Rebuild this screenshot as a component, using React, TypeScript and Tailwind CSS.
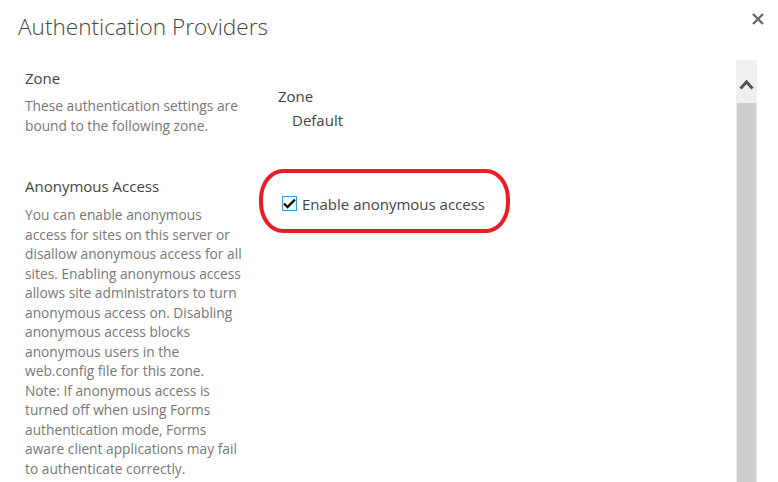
import React from "react";

const anonLines = [
  "You can enable anonymous",
  "access for sites on this server or",
  "disallow anonymous access for all",
  "sites. Enabling anonymous access",
  "allows site administrators to turn",
  "anonymous access on. Disabling",
  "anonymous access blocks",
  "anonymous users in the",
  "web.config file for this zone.",
  "Note: If anonymous access is",
  "turned off when using Forms",
  "authentication mode, Forms",
  "aware client applications may fail",
  "to authenticate correctly.",
];

export default function App() {
  const font = { fontFamily: '"Open Sans", "Noto Sans", sans-serif' };
  return (
    <div
      className="w-[778px] h-[482px] bg-white overflow-hidden flex flex-col"
      style={font}
    >
      <div className="flex justify-between items-start pl-[18px] pr-[13px] pt-[11px] h-[60px]">
        <h1 className="text-[22.6px] leading-[32px] text-[#444444] font-light">
          Authentication Providers
        </h1>
        <button className="mt-[1px] text-[#666666]">
          <svg width="14" height="14" viewBox="0 0 14 14">
            <path d="M2 2 L12 12 M12 2 L2 12" stroke="#666" strokeWidth="2.4" />
          </svg>
        </button>
      </div>
      <div className="flex flex-1 min-h-0">
        <div className="flex-1 pl-[25px]">
          <div className="flex">
            <div className="w-[224px] pt-[8px]">
              <div className="text-[15px] leading-[20px] text-[#444444]">Zone</div>
              <div className="mt-[8px] text-[13.75px] leading-[19.5px] text-[#777777]">
                <div className="whitespace-nowrap">These authentication settings are</div>
                <div className="whitespace-nowrap">bound to the following zone.</div>
              </div>
            </div>
            <div className="pl-[29px] pt-[26px]">
              <div className="text-[15px] leading-[20px] text-[#444444]">Zone</div>
              <div className="pl-[14px] mt-[4px] text-[15px] leading-[20px] text-[#444444]">
                Default
              </div>
            </div>
          </div>
          <div className="flex mt-[41px]">
            <div className="w-[224px]">
              <div className="text-[15px] leading-[20px] text-[#444444]">Anonymous Access</div>
              <div className="mt-[9px] text-[13.75px] leading-[19.5px] text-[#777777]">
                {anonLines.map((l) => (
                  <div key={l} className="whitespace-nowrap">
                    {l}
                  </div>
                ))}
              </div>
            </div>
            <div className="pl-[10px] -mt-[7px]">
              <div className="w-[251px] h-[64px] border-[4px] border-[#ed1c24] rounded-[24px/30px] flex items-center pl-[19px] pt-[5px]">
                <span className="w-[15px] h-[15px] border border-[#3a9be0] bg-white flex items-center justify-center">
                  <svg width="13" height="11" viewBox="0 0 13 11">
                    <path d="M1 5.5 L4.5 9 L12 1.5" stroke="#111" strokeWidth="2.4" fill="none" />
                  </svg>
                </span>
                <span className="ml-[5px] text-[15px] leading-[20px] text-[#444444]">
                  Enable anonymous access
                </span>
              </div>
            </div>
          </div>
        </div>
        <div className="w-[21px] mr-[21px] flex flex-col">
          <div className="h-[43px] bg-[#f0f0f0] flex items-center justify-center pt-[6px]">
            <svg width="15" height="11" viewBox="0 0 15 11">
              <path d="M1.5 9.5 L7.5 3 L13.5 9.5" stroke="#555" strokeWidth="3" fill="none" />
            </svg>
          </div>
          <div className="flex-1 bg-[#cdcdcd] border-x border-[#e8e8e8]" />
        </div>
      </div>
    </div>
  );
}
